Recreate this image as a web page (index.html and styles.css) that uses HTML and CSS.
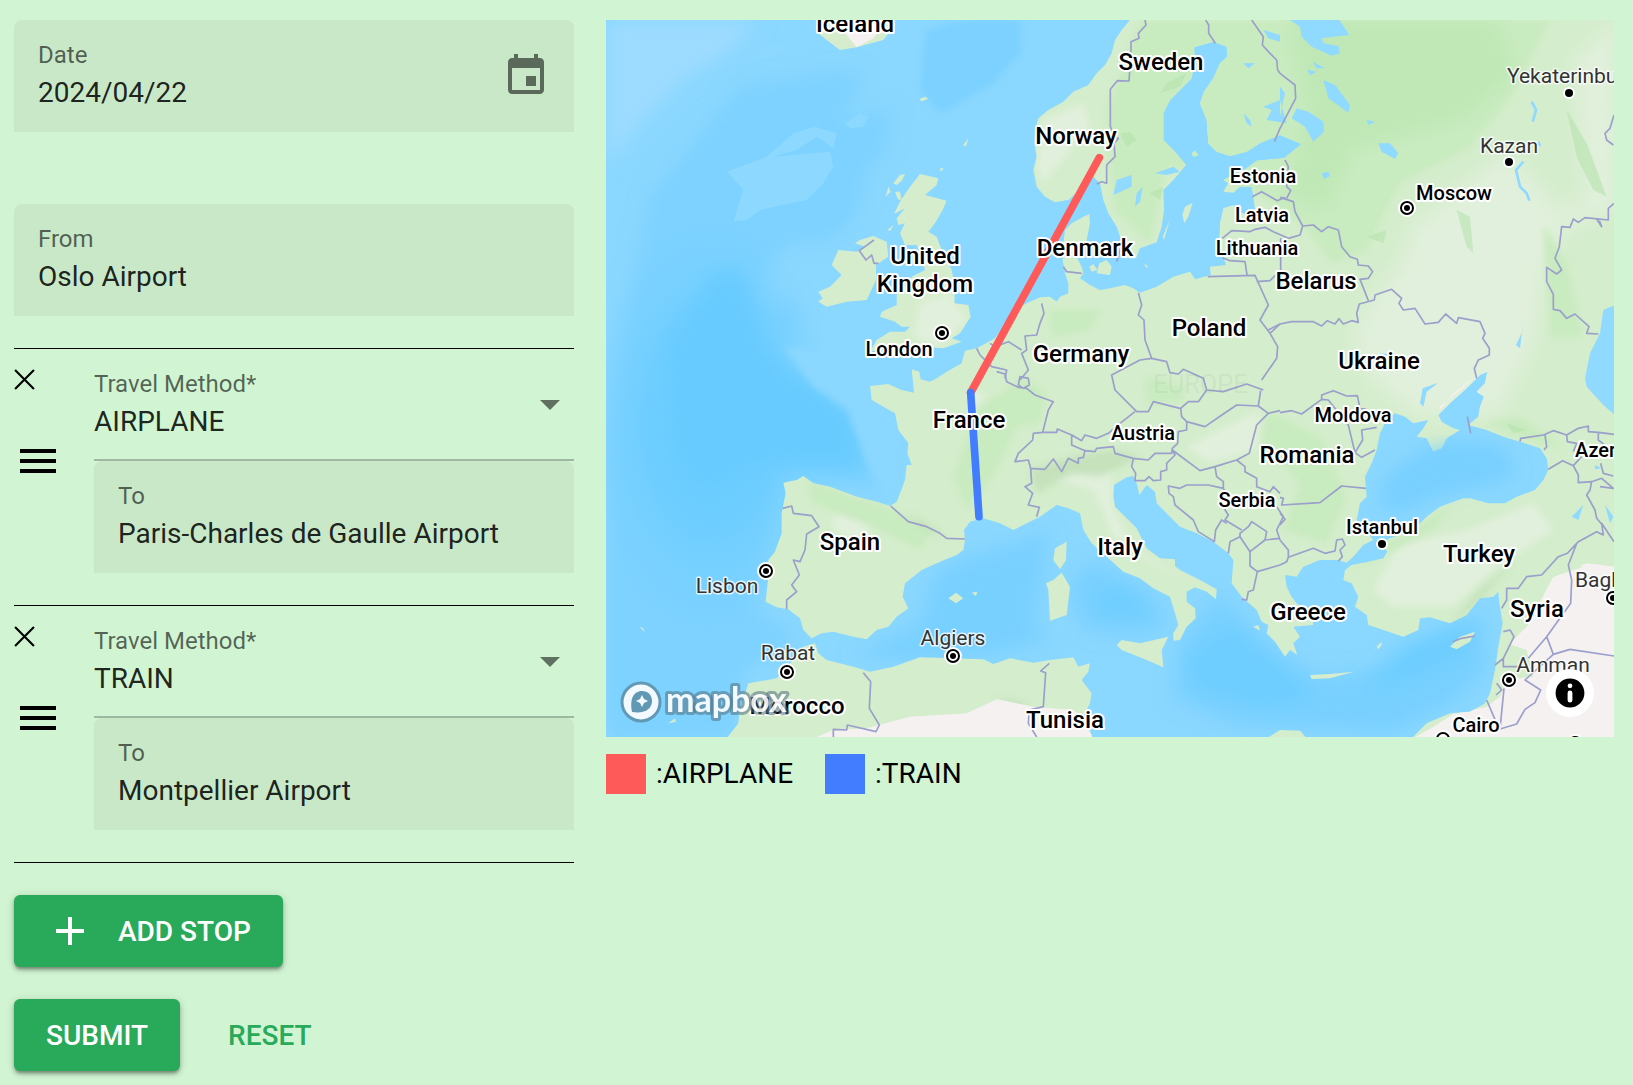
FILE: index.html
```html
<!DOCTYPE html>
<html lang="en">
<head>
<meta charset="utf-8">
<meta name="viewport" content="width=device-width, initial-scale=1">
<title>Trip planner</title>
<link rel="stylesheet" href="styles.css">
</head>
<body>
<main class="planner">
  <form class="trip-form">
    <div class="field field-filled field-date">
      <div class="field-text">
        <label for="date">Date</label>
        <input id="date" type="text" value="2024/04/22">
      </div>
      <button class="icon-button" type="button" aria-label="Open calendar">
        <svg class="icon" viewBox="0 0 24 24"><path d="M17 12h-5v5h5v-5zM16 1v2H8V1H6v2H5c-1.11 0-1.99.9-1.99 2L3 19c0 1.1.89 2 2 2h14c1.1 0 2-.9 2-2V5c0-1.1-.9-2-2-2h-1V1h-2zm3 18H5V8h14v11z"/></svg>
      </button>
    </div>

    <div class="field field-filled field-from">
      <div class="field-text">
        <label for="from">From</label>
        <input id="from" type="text" value="Oslo Airport">
      </div>
    </div>

    <ul class="stops">
      <li class="stop">
        <div class="stop-tools">
          <button class="icon-button stop-remove" type="button" aria-label="Remove stop">
            <svg viewBox="0 0 20 20"><path d="M1 1L19 19M19 1L1 19"/></svg>
          </button>
          <button class="icon-button stop-drag" type="button" aria-label="Move stop">
            <svg class="icon" viewBox="0 0 24 24"><path d="M3 18h18v-2H3v2zm0-5h18v-2H3v2zm0-7v2h18V6H3z"/></svg>
          </button>
        </div>
        <div class="stop-fields">
          <div class="field field-line">
            <div class="field-text">
              <label for="method-1">Travel Method*</label>
              <select id="method-1"><option selected>AIRPLANE</option><option>TRAIN</option></select>
            </div>
            <svg class="arrow" viewBox="0 0 20 10"><path d="M0 0h20L10 10z"/></svg>
          </div>
          <div class="field field-filled">
            <div class="field-text">
              <label for="to-1">To</label>
              <input id="to-1" type="text" value="Paris-Charles de Gaulle Airport">
            </div>
          </div>
        </div>
      </li>
      <li class="stop">
        <div class="stop-tools">
          <button class="icon-button stop-remove" type="button" aria-label="Remove stop">
            <svg viewBox="0 0 20 20"><path d="M1 1L19 19M19 1L1 19"/></svg>
          </button>
          <button class="icon-button stop-drag" type="button" aria-label="Move stop">
            <svg class="icon" viewBox="0 0 24 24"><path d="M3 18h18v-2H3v2zm0-5h18v-2H3v2zm0-7v2h18V6H3z"/></svg>
          </button>
        </div>
        <div class="stop-fields">
          <div class="field field-line">
            <div class="field-text">
              <label for="method-2">Travel Method*</label>
              <select id="method-2"><option>AIRPLANE</option><option selected>TRAIN</option></select>
            </div>
            <svg class="arrow" viewBox="0 0 20 10"><path d="M0 0h20L10 10z"/></svg>
          </div>
          <div class="field field-filled">
            <div class="field-text">
              <label for="to-2">To</label>
              <input id="to-2" type="text" value="Montpellier Airport">
            </div>
          </div>
        </div>
      </li>
    </ul>

    <div class="actions">
      <button class="button button-raised button-add" type="button">
        <svg class="icon" viewBox="0 0 24 24"><path d="M19 13h-6v6h-2v-6H5v-2h6V5h2v6h6v2z"/></svg>
        ADD STOP
      </button>
    </div>
    <div class="actions">
      <button class="button button-raised" type="submit">SUBMIT</button>
      <button class="button button-flat" type="reset">RESET</button>
    </div>
  </form>

  <section class="trip-map">
    <div class="map">
      <svg class="map-canvas" viewBox="0 0 1008 717" role="img" aria-label="Map of the route">
        <defs>
          <radialGradient id="deep"><stop offset="0" stop-color="#66cbff"/><stop offset=".5" stop-color="#68ccff" stop-opacity=".7"/><stop offset="1" stop-color="#74d0ff" stop-opacity="0"/></radialGradient>
          <filter id="soft" x="-10%" y="-10%" width="120%" height="120%"><feGaussianBlur stdDeviation="10"/></filter>
          <filter id="softer" x="-20%" y="-20%" width="140%" height="140%"><feGaussianBlur stdDeviation="28"/></filter>
          <path id="europe" d="M1590 30L1565 60 1545 90 1535 130 1515 165 1490 190 1465 225 1420 245 1390 275 1345 300 1315 325 1305 360 1303 400 1310 440 1300 480 1310 530 1335 560 1365 577 1405 570 1440 540 1480 500 1500 520 1510 570 1525 610 1550 650 1562 685 1560 730 1575 745 1608 745 1620 715 1670 697 1685 650 1692 600 1690 540 1720 510 1758 465 1725 425 1690 390 1690 310 1710 270 1740 240 1775 205 1785 150 1782 112 1840 95 1880 110 1882 140 1860 160 1840 205 1812 245 1800 280 1820 330 1825 400 1850 425 1890 438 1940 425 1980 400 2040 375 2105 402 2052 445 1970 452 1940 475 1890 500 1870 510 1885 520 1870 545 1900 548 1920 530 1955 530 1960 560 1965 600 1945 615 1915 605 1900 585 1870 595 1860 640 1858 690 1870 740 1878 765 1830 770 1832 795 1785 808 1770 785 1720 800 1670 830 1620 848 1600 835 1575 825 1530 835 1500 840 1470 825 1440 805 1450 790 1445 770 1432 745 1455 715 1460 690 1470 640 1468 612 1450 620 1415 640 1395 660 1390 700 1388 750 1395 790 1405 820 1405 850 1380 860 1370 875 1350 860 1320 862 1280 880 1240 900 1220 935 1185 985 1130 1015 1095 1022 1085 1060 1040 1085 1010 1105 990 1115 962 1108 958 1085 935 1078 942 1148 905 1140 865 1122 810 1128 815 1170 850 1190 885 1210 895 1260 925 1300 922 1330 935 1365 920 1365 915 1410 900 1450 890 1475 870 1488 830 1475 770 1460 690 1430 640 1420 610 1398 590 1410 550 1418 557 1450 545 1510 545 1570 525 1625 505 1650 505 1700 497 1775 530 1792 565 1798 600 1825 610 1860 635 1885 665 1870 700 1865 760 1880 800 1888 830 1860 865 1850 890 1820 925 1795 908 1760 915 1720 965 1680 1020 1655 1070 1635 1090 1620 1095 1590 1092 1560 1110 1535 1150 1525 1200 1540 1240 1560 1270 1545 1320 1520 1370 1485 1405 1495 1440 1510 1450 1560 1475 1600 1520 1640 1570 1685 1620 1705 1660 1735 1710 1760 1725 1810 1735 1845 1720 1870 1720 1892 1740 1890 1760 1850 1787 1825 1785 1795 1760 1775 1760 1745 1785 1732 1820 1745 1848 1768 1850 1738 1800 1710 1740 1680 1725 1668 1725 1648 1680 1645 1640 1615 1610 1555 1580 1525 1545 1490 1540 1460 1542 1425 1580 1402 1600 1398 1610 1420 1618 1455 1640 1425 1665 1445 1670 1480 1710 1520 1740 1550 1790 1570 1840 1595 1885 1630 1900 1650 1895 1720 1925 1760 1970 1800 1985 1835 2005 1845 2000 1870 2025 1895 2055 1940 2070 1920 2092 1935 2080 1900 2100 1880 2080 1850 2140 1845 2135 1820 2090 1780 2075 1760 2060 1730 2055 1695 2090 1700 2110 1670 2160 1650 2215 1650 2240 1658 2260 1640 2290 1605 2320 1590 2270 1530 2280 1480 2300 1460 2295 1400 2315 1360 2330 1320 2340 1270 2360 1230 2385 1210 2415 1220 2440 1240 2485 1230 2470 1255 2450 1280 2480 1285 2500 1325 2525 1315 2540 1285 2580 1260 2560 1255 2525 1235 2515 1215 2550 1180 2600 1135 2640 1095 2662 1085 2655 1120 2630 1145 2652 1160 2640 1190 2635 1220 2605 1245 2660 1260 2710 1280 2760 1295 2820 1315 2840 1345 2845 1380 2830 1410 2805 1440 2750 1460 2715 1480 2665 1480 2610 1465 2590 1465 2520 1490 2480 1520 2440 1560 2370 1585 2345 1600 2362 1625 2350 1645 2305 1655 2255 1665 2235 1680 2230 1710 2255 1720 2275 1760 2265 1790 2300 1815 2305 1845 2350 1860 2410 1880 2455 1860 2460 1825 2490 1822 2550 1840 2600 1815 2640 1765 2680 1760 2695 1745 2698 1780 2708 1840 2695 1910 2685 1980 2670 2050 2655 2080 2610 2105 2550 2110 2480 2140 2435 2185H3045V30z"/>
          <path id="africa" d="M380 2185L415 2140 418 2110 445 2020 530 2005 580 1950 610 1910 645 1900 655 1930 680 1950 760 1970 810 1985 880 1970 960 1942 1150 1948 1180 1962 1230 1945 1300 1958 1350 1950 1420 1942 1435 1970 1470 1960 1465 1985 1445 2010 1475 2050 1470 2080 1450 2120 1480 2185zM2000 2185L2040 2160 2100 2162 2120 2185z"/>
          <path id="isles" d="M960 492L1015 505 1010 525 975 555 1040 572 1028 600 1005 640 985 665 1010 680 1025 720 1055 780 1065 830 1063 880 1105 885 1112 920 1080 970 1055 985 1085 995 1030 1015 985 1012 960 1005 900 1010 855 1015 810 1025 830 990 870 965 915 965 930 950 905 950 885 935 840 920 845 905 890 885 890 855 910 840 935 800 975 780 965 740 950 705 915 705 900 670 915 640 895 645 890 625 915 595 882 612 900 575 930 530zM780 690L820 678 860 695 865 740 828 765 828 810 800 870 740 875 680 890 655 875 668 865 655 845 690 830 725 795 695 765 715 720 770 725 795 710 765 700zM650 65L680 90 720 120 770 112 850 90 885 45 875 25H655zM880 520L900 495 915 492 905 512 890 525zM857 560L865 530 872 545zM885 545L900 545 905 570 893 568zM862 660L880 645 872 662zM958 268L975 260 985 266 965 274zM1090 405L1105 385 1098 410zM1020 475L1032 475 1022 485zM1490 790L1498 760 1520 750 1535 770 1530 795zM1468 770L1480 762 1492 780 1475 785zM1755 590L1778 578 1765 620 1753 640 1747 615zM1710 628L1692 690 1688 680zM1775 430L1785 422 1795 435 1780 440zM1632 762L1645 768 1640 774zM1400 1595L1365 1615 1360 1650 1380 1678 1398 1650zM1385 1688L1410 1730 1400 1815 1350 1832 1345 1740 1338 1720 1360 1710zM1550 1905L1565 1890 1620 1900 1705 1880 1685 1920 1690 1972 1640 1950 1565 1920zM1045 1765L1068 1748 1090 1765 1068 1780zM1115 1748L1132 1745 1128 1758zM2130 1995L2190 1992 2262 1985 2190 2005 2135 2007zM2550 1910L2580 1880 2625 1865 2610 1895 2570 1918zM2330 1910L2345 1895 2345 1905 2335 1918zM2000 1775L2010 1762 2020 1775zM1960 1850L1975 1845 1980 1862zM205 2140L225 2125 228 2135zM118 1850L130 1855 135 1866z"/>
          <clipPath id="land"><use href="#europe"/><use href="#africa"/><use href="#isles"/></clipPath>
        </defs>

        <svg width="1008" height="717" viewBox="18 30 3024 2151">
          <rect x="18" y="30" width="3024" height="2151" fill="#8ad7ff"/>
          <!-- sea depth -->
          <g class="depth">
            <path fill="#7dd2ff" filter="url(#softer)" d="M150 560L250 440 330 340 420 230 560 210 700 190 780 190 770 260 700 330 880 300 850 430 790 490 780 600 700 690 560 700 490 800 500 900 580 860 600 960 560 1020 620 1120 720 1180 790 1290 850 1440 700 1410 560 1340 530 1500 490 1650 470 1800 600 1880 420 1990 400 2190 20 2190V1300L80 900z"/>
            <path fill="#7bd1ff" filter="url(#soft)" d="M980 60L1100 30 1260 30 1260 130 1180 220 1020 310 960 240z"/>
            <path fill="#9ddcff" filter="url(#softer)" d="M20 30H480L380 130 250 210 120 340 50 440 20 450z"/>
            <path fill="#8dd8ff" d="M400 635L430 540 380 485 500 440 580 370 640 350 710 370 700 415 650 380 590 420 520 440 640 430 690 425 700 470 670 520 620 570 480 600 440 630zM735 340L780 310 805 320 790 350 750 355zM410 175L500 110 600 90 530 130z"/>
            <ellipse cx="330" cy="1250" rx="380" ry="620" fill="url(#deep)"/>
            <ellipse cx="640" cy="1250" rx="300" ry="210" fill="url(#deep)"/>
            <path fill="#67cbff" filter="url(#softer)" d="M350 780L430 790 500 1020 600 1110 720 1220 790 1380 620 1330 450 1380 300 1440 230 1350 200 1000z"/>
            <path fill="#8ad7ff" filter="url(#soft)" d="M550 1010L800 1030 950 1030 930 1200 890 1360 870 1480 810 1380 740 1200 640 1130z"/>
          </g>
          <path fill="#78d0ff" filter="url(#softer)" d="M1080 1650L1250 1600 1340 1560 1330 1700 1300 1830 1340 1890 1180 1930 900 1950 760 1930 960 1850 1000 1700zM1430 1680L1500 1660 1660 1760 1700 1850 1620 1870 1460 1860 1410 1760zM1750 1880L1860 1750 2000 1900 2150 2000 2400 1980 2640 1800 2660 1980 2560 2080 2380 2170 1900 2140 1720 2060z"/>
          <path fill="#6dceff" filter="url(#softer)" d="M1760 1940L1900 1850 2060 1990 2150 2060 2000 2090 1780 2030zM2420 1900L2620 1840 2600 1930 2450 2010 2280 2040zM1500 1740L1600 1750 1650 1810 1500 1810z"/>
          <path fill="#78d0ff" filter="url(#softer)" d="M2330 1480L2400 1400 2530 1300 2700 1320 2740 1400 2640 1420 2500 1450 2400 1510z"/>

          <use href="#europe" fill="#d4edcc"/>
          <use href="#africa" fill="#d4edcc"/>
          <use href="#isles" fill="#d6edcd"/>
          <path fill="#78d0ff" filter="url(#softer)" d="M2340 1440L2400 1370 2530 1310 2700 1320 2740 1380 2640 1410 2500 1440 2400 1480z"/>

          <!-- ground cover -->
          <g clip-path="url(#land)">
            <path fill="#c9ebc0" filter="url(#soft)" d="M1620 30H2850L2720 280 2600 420 2400 520 2300 720 2200 760 2100 640 1960 540 1700 470 1650 700 1540 600 1520 300z"/>
            <path fill="#bfe8b6" filter="url(#softer)" d="M2060 30L2700 30 2740 200 2600 330 2480 360 2260 420 2180 600 2060 560 2120 300z"/>
            <path fill="#e1f0dc" filter="url(#softer)" d="M3050 30L2920 150 2960 560 2880 600 2720 420 2550 560 2440 640 2400 760 2330 850 2260 960 2290 1080 2360 1150 2460 1220 2700 1210 2800 1000 2840 760 2900 650 3050 600z"/>
            <path fill="#e1f0dc" filter="url(#soft)" d="M1330 330L1450 280 1470 350 1380 460 1330 520 1310 470zM960 880L1050 850 1100 930 1020 1010 940 980zM2320 1740L2400 1600 2600 1560 2800 1480 2860 1560 2680 1680 2560 1790 2380 1790zM1330 1400L1530 1370 1540 1500 1620 1640 1780 1720 1540 1580 1480 1440zM700 1510L820 1520 800 1600 700 1560zM1100 1140L1160 1150 1120 1210zM1760 1310L1980 1200 1970 1320 1830 1360z"/>
            <path fill="#c9ebc0" filter="url(#soft)" d="M1270 1100L1340 1150 1320 1240 1250 1250 1180 1400 1100 1500 1060 1400 1130 1200zM620 1410L860 1490 1000 1560 960 1620 840 1560 640 1480zM1640 1100L1760 1130 1740 1180 1640 1180zM1340 900L1500 900 1470 960 1360 980zM2260 1680L2500 1560 2560 1480 2360 1600zM2000 1200L2160 1280 2240 1460 2180 1600 2050 1560 2100 1420 1990 1300zM2650 1240L2760 1220 2900 1320 2820 1300zM2830 640L2900 760 2950 980 2850 980z"/>
            <path fill="#b5e3ad" opacity=".6" d="M1560 370L1590 365 1610 390 1580 410zM1700 220L1760 190 1740 230 1680 250zM2900 300L2960 400 3020 560 2980 540 2930 440zM2720 1240L2780 1260 2740 1270zM1650 550L1690 530 1680 570zM2570 600L2610 620 2620 730 2600 710zM2300 680L2360 660 2350 700z"/>
            <path fill="#c1dfb7" opacity=".8" filter="url(#soft)" d="M1290 1380L1420 1340 1540 1320 1620 1340 1500 1400 1420 1390 1310 1450zM2550 1840L2640 1740 2740 1660 2620 1790zM930 1510L1010 1560 1030 1580 960 1550zM1180 2060L1280 2080 1260 2100z"/>
            <path fill="#f5f1f1" d="M640 2185L700 2160 800 2155 930 2120 1100 2110 1190 2068 1300 2090 1420 2100 1450 2120 1480 2190H640zM3045 1670L2960 1660 2880 1690 2830 1720 2800 1780 2750 1830 2720 1900 2780 1920 2800 2000 2720 2010 2700 2060 2660 2090 2560 2112 2500 2150 2440 2185H3045zM2520 1190L2640 1090 2560 1150 2520 1200zM710 30H860L820 85 770 112 740 75z"/>
            <path fill="#d4edcc" d="M2720 1780L2790 1740 2800 1690 2900 1660 2950 1670 2860 1700 2780 1850 2730 1900 2690 1990 2710 1900z"/>
          </g>

          <!-- lakes and inland seas -->
          <path fill="#90d9ff" d="M2070 30H2218L2248 75 2165 85 2170 100 2215 108 2220 130 2195 137 2135 110 2105 80 2100 50zM2090 295L2125 305 2170 335 2172 365 2140 395 2115 350 2075 325zM2170 210L2205 225 2250 285 2245 308 2185 265zM1540 555L1550 510 1595 495 1595 530zM1605 590L1610 550 1628 530 1620 575zM1665 490L1720 470 1740 485 1700 495zM2335 400L2370 400 2395 430 2385 447 2345 425zM3045 885L3010 900 3000 970 2970 1030 2955 1105 2960 1130 3010 1185 3045 1215zM2165 490L2185 485 2190 498 2172 507zM2300 330L2325 335 2305 345zM1990 60L2040 75 2040 95 2005 85zM1930 160L1965 160 1945 175zM1930 310L1950 330 1955 350 1940 340zM1990 290L2040 270 2060 340 2000 330 2015 300zM2122 180L2150 185 2130 195zM2138 155L2175 175 2150 175zM2040 320L2055 250 2040 230zM2770 935L2760 1015 2748 1005 2765 970zM2460 1180L2468 1135 2515 1118 2480 1145 2470 1190zM3015 1485L3040 1520 3030 1540zM2915 1520L2950 1485 2935 1530zM2340 1030L2390 1035 2345 1038zM2985 1365L3005 1375 2985 1378z"/>
          <path class="river" d="M2795 275L2808 300 2798 335M2770 455L2748 480 2760 530 2780 550 2788 572M2815 395L2820 408"/>

          <!-- country borders -->
          <g class="borders">
            <path d="M822 690L778 722 798 750 815 735 822 760 835 760M548 1495L575 1488 580 1510 635 1517 657 1550 620 1572 615 1620 600 1655 580 1650 598 1695 575 1725 590 1745 560 1770V1798M872 1488L925 1535 980 1550 1020 1570 1040 1585 1095 1587M790 1988L812 2015 808 2095 838 2145 828 2165 742 2145 740 2160 700 2158V2185"/>
            <g transform="translate(1020)">
              <path d="M615 30L618 45 595 70 597 85 573 95V125L567 213 532 212 511 238V350L525 380 535 385 522 400 525 440 500 465V520L485 515 470 522M797 30L806 45V70L826 100M935 30L970 80 967 105 990 130 1010 150 1013 180 1020 190 1065 225 1067 265 1020 355 1003 395M937 560L965 545 1012 572 1035 562M847 685L875 662 930 665 945 658 975 652 1000 665 1045 685M848 743L870 752 915 755 921 795M803 800L945 796 985 885 960 930 990 970 1013 1010 1010 1045 965 1110M950 815L990 812 1022 780V685M990 970L1020 942M595 848L605 885 595 915 612 930 615 990 635 1045 600 1050 515 1095 525 1140 590 1205 625 1205 640 1175 720 1195M635 1045L680 1055 690 1088 715 1092 730 1078 790 1105 800 1140 850 1145 920 1122 970 1140M305 880L312 910 300 940 290 975 255 978 260 1020 245 1030 265 1080 240 1110M150 1000L165 1010 205 995 245 1020M110 1015L120 1035 155 1070 200 1080 195 1105M370 770L380 785 425 790M540 720L530 755"/>
            </g>
            <g transform="translate(2040)">
              <path d="M15 450L25 470 20 530 32 542 20 565M0 562L40 575 45 605 68 648 60 675 25 685M68 648L100 645 125 665 145 650 175 660 185 710 210 740 232 748 235 765 265 768 278 785 265 805 240 808 265 872M-35 960L0 942 35 935 100 935 125 948 142 932 165 942 177 926 190 942 215 932 235 937 230 910 238 882 283 870 285 855 335 838 365 865 357 880 370 900 405 895 435 942 475 937 497 912 530 940 535 923 600 935 615 970 608 985 628 1015V1035L595 1050 583 1075 590 1105M1002 580L985 595V630L915 623 895 637 880 627 870 652 845 650 838 710 825 745 845 780 830 792 800 772V815L820 853V898L840 902 860 925 885 912 927 950 920 970 955 972M1002 315L990 355 975 370 980 390 1000 405M950 628L965 650 958 632"/>
            </g>
            <g transform="translate(1020 1080)">
              <path d="M170 5L195 12 200 35 235 52 260 55 285 75 340 95 325 120 308 187M240 20L265 25 268 45 250 55 235 45zM308 187L350 187 352 177 395 195 425 212 435 195 470 205 505 190 540 160 585 125M395 195V225L435 242 430 262 415 265V280L385 265 365 305 340 267 315 298 272 295 265 270 225 275 235 250 278 210 280 190 308 187M272 295L275 340 255 350 278 370 265 405 298 412 290 440M435 242L465 245 470 235 520 230 525 250 580 265 625 270 645 250 695 250 697 235 713 220 715 185 740 180V155L725 140 722 115 745 95 775 95 800 60M580 265L575 290 587 310 585 332 615 332 627 320 640 332 662 330 662 305 680 300 680 280 705 255 697 240 780 302 825 290 890 270 928 250 950 165 985 130 955 108 890 105 850 132 795 170 740 155M955 108L962 62M825 290L830 320 850 335 850 355 805 345 740 345 720 355 685 348 687 370 700 380 705 405 760 450 775 485 823 515 827 480 845 450 860 460M850 355L865 380 855 420 865 435 855 450 905 480M890 270L915 290 915 305 950 325V350L990 365 1000 350 1020 370M1010 410L1030 440 1010 480 1020 510M865 550L870 515 900 500 930 545V588L952 605 940 660 925 665 920 690 905 688M900 500V490L925 470 935 455 980 485 975 510 930 545M975 510L1020 505M952 605L1020 585M985 130L1020 122M328 880L302 903 317 908 310 1010 268 1020 265 1060 290 1101"/>
            </g>
            <g transform="translate(2040 1080)">
              <path d="M0 128L35 122 65 132 125 88 125 75 160 62 200 78 232 77 240 115 258 118M125 88L145 90 205 165 225 248 245 262 285 240M225 248L248 210 245 180 290 172M0 382L10 385 5 405 120 398 185 348 258 355M0 430L15 448 0 465M0 510L25 540V562L20 575 0 585M25 562L100 535 135 550 165 543 170 510 187 507 195 525 180 540 187 560 175 573M665 715L680 690V655H715L740 620 785 615 835 560 862 550 890 520 895 515 950 485 970 495 965 460 1002 515M890 520L865 585 875 630 872 700 800 800 745 865M800 800L820 853 870 838 1002 858M820 853L735 930 782 960 765 998 735 1018 710 1062 660 1077 672 955M620 990L655 1072M670 785L690 780 702 800 670 865 645 885M670 865V890H715M650 940L665 960 648 975M720 215L722 205 790 195 820 182 860 195 895 175 925 168V185L955 187 1002 193M795 195L800 230 792 240M860 195L862 215 890 220 880 245M805 298L848 272 880 287 895 315V338L935 335 930 360 920 375 945 420 950 445 975 475M880 287L905 260M935 335L965 325 1000 355 960 350M955 187V210L980 230M962 280L970 310 1000 318M562 140L572 190M518 815L545 805 585 798"/>
            </g>
          </g>

          <text class="continent" x="1660" y="1148">EUROPE</text>

          <path class="route route-airplane" d="M1498 443L1112 1148"/>
          <path class="route route-train" d="M1112 1148L1137 1520"/>
        </svg>

        <g class="capitals">
          <g><circle class="halo" cx="336" cy="313" r="9"/><circle class="ring" cx="336" cy="313" r="6"/><circle cx="336" cy="313" r="3"/></g>
          <g><circle class="halo" cx="801" cy="188" r="9"/><circle class="ring" cx="801" cy="188" r="6"/><circle cx="801" cy="188" r="3"/></g>
          <g><circle class="halo" cx="160" cy="551" r="9"/><circle class="ring" cx="160" cy="551" r="6"/><circle cx="160" cy="551" r="3"/></g>
          <g><circle class="halo" cx="181" cy="652" r="9"/><circle class="ring" cx="181" cy="652" r="6"/><circle cx="181" cy="652" r="3"/></g>
          <g><circle class="halo" cx="347" cy="636" r="9"/><circle class="ring" cx="347" cy="636" r="6"/><circle cx="347" cy="636" r="3"/></g>
          <g><circle class="halo" cx="903" cy="660" r="9"/><circle class="ring" cx="903" cy="660" r="6"/><circle cx="903" cy="660" r="3"/></g>
          <g><circle class="halo" cx="1007" cy="578" r="9"/><circle class="ring" cx="1007" cy="578" r="6"/><circle cx="1007" cy="578" r="3"/></g>
          <g><circle class="halo" cx="837" cy="719" r="9"/><circle class="ring" cx="837" cy="719" r="6"/></g>
          <g><circle class="halo" cx="903" cy="142" r="6"/><circle cx="903" cy="142" r="4"/></g>
          <g><circle class="halo" cx="963" cy="73" r="6"/><circle cx="963" cy="73" r="4"/></g>
          <g><circle class="halo" cx="776" cy="524" r="6"/><circle cx="776" cy="524" r="4"/></g>
        </g>

        <g class="labels labels-country">
          <text x="249" y="12">Iceland</text>
          <text x="555" y="50">Sweden</text>
          <text x="470" y="124">Norway</text>
          <text x="479" y="236">Denmark</text>
          <text x="319" y="244">United</text>
          <text x="319" y="272">Kingdom</text>
          <text x="475" y="342">Germany</text>
          <text x="603" y="316">Poland</text>
          <text x="710" y="269">Belarus</text>
          <text x="773" y="349">Ukraine</text>
          <text x="701" y="443">Romania</text>
          <text x="363" y="408">France</text>
          <text x="244" y="530">Spain</text>
          <text x="514" y="535">Italy</text>
          <text x="191" y="694">Morocco</text>
          <text x="459" y="708">Tunisia</text>
          <text x="702" y="600">Greece</text>
          <text x="873" y="542">Turkey</text>
          <text x="931" y="597">Syria</text>
        </g>
        <g class="labels labels-minor">
          <text x="293" y="336">London</text>
          <text x="657" y="163">Estonia</text>
          <text x="656" y="202">Latvia</text>
          <text x="651" y="235">Lithuania</text>
          <text x="848" y="180">Moscow</text>
          <text x="747" y="402">Moldova</text>
          <text x="641" y="487">Serbia</text>
          <text x="537" y="420">Austria</text>
          <text x="776" y="514">Istanbul</text>
          <text x="870" y="712">Cairo</text>
          <text class="start" x="969" y="437">Azerbaijan</text>
          <text class="start" x="963" y="731">S</text>
        </g>
        <g class="labels labels-city">
          <text x="903" y="133">Kazan</text>
          <text class="start" x="901" y="63">Yekaterinburg</text>
          <text x="121" y="573">Lisbon</text>
          <text x="182" y="640">Rabat</text>
          <text x="347" y="625">Algiers</text>
          <text class="start" x="969" y="567">Baghdad</text>
          <text x="947" y="652">Amman</text>
        </g>
      </svg>
      <a class="map-logo" href="#" aria-label="Mapbox homepage">
        <svg viewBox="0 0 180 44">
          <circle class="logo-disc" cx="21" cy="22" r="19"/>
          <path class="logo-pin" d="M12 32C9 17 15 11 22 11c6 0 10 4 10 10 0 7-6 13-20 11z"/>
          <path class="logo-star" d="M22 15l2 4 4 2-4 2-2 4-2-4-4-2 4-2z"/>
          <text x="46" y="32">mapbox</text>
        </svg>
      </a>
      <button class="map-info" type="button" aria-label="Toggle attribution">
        <svg viewBox="0 0 20 20"><path fill-rule="evenodd" d="M4 10a6 6 0 1 0 12 0 6 6 0 1 0-12 0m5-3a1 1 0 1 0 2 0 1 1 0 1 0-2 0m0 3a1 1 0 1 1 2 0v3a1 1 0 1 1-2 0"/></svg>
      </button>
    </div>
    <ul class="legend">
      <li><span class="swatch swatch-airplane"></span>:AIRPLANE</li>
      <li><span class="swatch swatch-train"></span>:TRAIN</li>
    </ul>
  </section>
</main>
</body>
</html>
```
FILE: styles.css
```css
* { box-sizing: border-box; }

body {
  margin: 0;
  background: #d1f5d3;
  color: #000;
  font-family: Roboto, "Liberation Sans", sans-serif;
  font-size: 28px;
}

button, input, select { font: inherit; color: inherit; }
ul { margin: 0; padding: 0; list-style: none; }
svg { display: block; }

.planner {
  display: grid;
  grid-template-columns: minmax(0, 5fr) minmax(0, 9fr);
  gap: 32px;
  align-items: start;
  padding: 20px 19px 14px 14px;
}

/* Form fields */
.field {
  display: flex;
  height: 112px;
  color: rgba(0, 0, 0, .87);
}
.field-filled {
  align-items: center;
  gap: 24px;
  padding: 0 24px;
  border-radius: 8px 8px 0 0;
  background: #c8e8c8;
}
.field-line {
  align-items: center;
  padding: 2px 14px 0 0;
  border-bottom: 2px solid #9fb9a0;
}
.field-text {
  display: flex;
  flex: 1;
  flex-direction: column;
  align-self: flex-start;
  gap: 6px;
  min-width: 0;
  padding-top: 21px;
}
.field-line .field-text { padding-top: 19px; }
.field-text label {
  color: rgba(0, 0, 0, .6);
  font-size: 24px;
  line-height: 28px;
}
.field-text input,
.field-text select {
  width: 100%;
  height: 36px;
  margin: 0;
  padding: 0;
  border: 0;
  outline: 0;
  background: none;
  line-height: 36px;
  appearance: none;
}
.field-date { margin-bottom: 72px; }
.field-from { margin-bottom: 32px; }
.arrow { width: 20px; height: 10px; fill: rgba(0, 0, 0, .54); }

.icon { width: 48px; height: 48px; fill: currentColor; }
.icon-button {
  padding: 0;
  border: 0;
  background: none;
  color: #000;
  cursor: pointer;
}
.field-date .icon-button { color: #5a695a; }

/* Stops */
.stops { border-top: 1px solid #000; }
.stop {
  display: grid;
  grid-template-columns: 80px minmax(0, 1fr);
  padding-bottom: 32px;
  border-bottom: 1px solid #000;
}
.stop-tools {
  display: grid;
  grid-template-rows: 60px 104px 60px;
  align-items: center;
  justify-items: start;
}
.stop-remove svg {
  width: 21px;
  height: 21px;
  fill: none;
  stroke: #000;
  stroke-width: 2;
}

/* Buttons */
.actions {
  display: flex;
  gap: 16px;
  margin-top: 32px;
}
.button {
  display: flex;
  align-items: center;
  gap: 24px;
  height: 72px;
  padding: 0 32px;
  border: 0;
  border-radius: 6px;
  font-weight: 500;
  cursor: pointer;
}
.button-raised {
  background: #29a95a;
  color: #fff;
  box-shadow: 0 3px 3px -1px rgba(0, 0, 0, .25), 0 3px 5px rgba(0, 0, 0, .2), 0 1px 10px rgba(0, 0, 0, .12);
}
.button-flat { background: none; color: #29a95a; }

/* Map */
.map { position: relative; }
.map-canvas { width: 100%; height: auto; }
.borders { fill: none; stroke: #9a9fcb; stroke-width: 5; stroke-linejoin: round; }
.river { fill: none; stroke: #90d9ff; stroke-width: 8; }
.route { fill: none; stroke-width: 23; stroke-linecap: round; }
.route-airplane { stroke: #ff5a5a; }
.route-train { stroke: #427cff; }
.continent { fill: rgba(120, 150, 120, .1); font-size: 76px; }
.halo { fill: #fff; }
.ring { fill: #fff; stroke: #000; stroke-width: 2; }
.labels text {
  text-anchor: middle;
  stroke: #fff;
  stroke-width: 4;
  stroke-linejoin: round;
  paint-order: stroke;
}
.labels .start { text-anchor: start; }
.labels-country { font-size: 24px; font-weight: 500; }
.labels-minor { font-size: 20px; font-weight: 500; }
.labels-city { fill: #333; font-size: 21px; }
.labels-city text { stroke: rgba(255, 255, 255, .8); stroke-width: 3; }

.map-logo {
  position: absolute;
  left: 14px;
  bottom: 13px;
  width: 180px;
  opacity: .9;
}
.logo-disc { fill: #fff; stroke: #5e93ae; stroke-width: 3; }
.logo-pin { fill: #5e93ae; }
.logo-star { fill: #fff; }
.map-logo text {
  fill: #fff;
  stroke: rgba(80, 110, 125, .6);
  stroke-width: 6;
  stroke-linejoin: round;
  paint-order: stroke;
  font-family: Lato, sans-serif;
  font-size: 34px;
  font-weight: 700;
}
.map-info {
  position: absolute;
  right: 20px;
  bottom: 20px;
  width: 48px;
  height: 48px;
  padding: 0;
  border: 0;
  border-radius: 50%;
  background: #fff;
  cursor: pointer;
}

/* Legend */
.legend {
  display: flex;
  gap: 32px;
  margin-top: 16px;
}
.legend li {
  display: flex;
  align-items: center;
  gap: 10px;
  line-height: 42px;
}
.swatch { width: 40px; height: 40px; }
.swatch-airplane { background: #ff5a5a; }
.swatch-train { background: #427cff; }
```
